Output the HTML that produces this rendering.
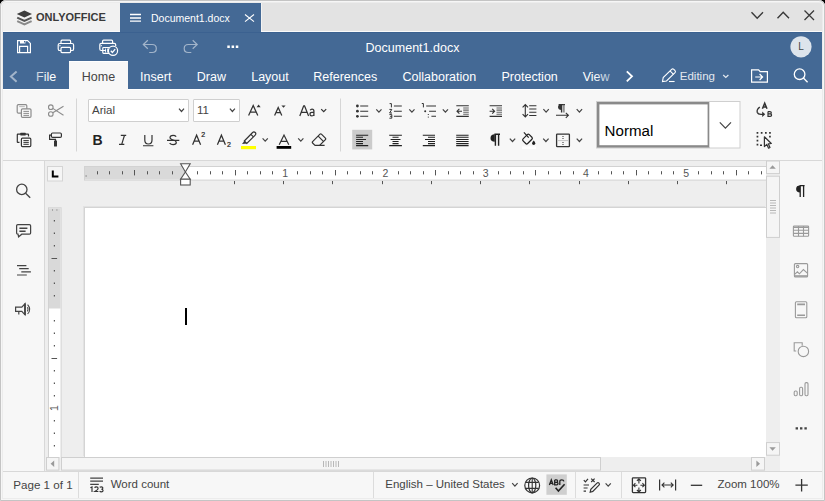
<!DOCTYPE html>
<html><head><meta charset="utf-8">
<style>
*{box-sizing:border-box;margin:0;padding:0}
html,body{width:825px;height:501px;overflow:hidden;background:#000}
body{font-family:"Liberation Sans",sans-serif;position:relative}
.a{position:absolute}
.t{position:absolute;white-space:nowrap;line-height:1}
svg{position:absolute;overflow:visible}
#win{position:absolute;left:0;top:0;width:825px;height:501px;background:#f7f7f7;border-radius:6px 6px 0 0;overflow:hidden}
</style></head>
<body>
<div id="win">
  <!-- title bar -->
  <div class="a" style="left:0;top:0;width:825px;height:33px;background:#e3e3e3"></div>
  <div class="a" style="left:2px;top:2px;width:118px;height:29px;background:#f1f1f1"></div>
  <div class="a" style="left:0;top:31px;width:825px;height:1px;background:#fafafa"></div>
  <div class="a" style="left:120px;top:3px;width:141px;height:30px;background:#446995"></div>
  <div class="a" style="left:261px;top:3px;width:1px;height:28px;background:#f3f3f3"></div>

  <!-- blue header -->
  <div class="a" style="left:0;top:32px;width:825px;height:58px;background:#446995"></div>
  <div class="a" style="left:0;top:32px;width:825px;height:1px;background:#3b6190"></div>
  <!-- active tab -->
  <div class="a" style="left:69px;top:61px;width:59px;height:29px;background:#f7f7f7;border-top:1px solid #fff"></div>
  <div class="a" style="left:0;top:89px;width:69px;height:1px;background:#fff"></div>
  <div class="a" style="left:128px;top:89px;width:697px;height:1px;background:#fff"></div>

  <!-- ribbon -->
  <div class="a" style="left:0;top:90px;width:825px;height:70px;background:#f7f7f7"></div>
  <div class="a" style="left:0;top:160px;width:825px;height:1px;background:#d8d8d8"></div>


  <div class="a" style="left:88px;top:99px;width:101px;height:23px;background:#fff;border:1px solid #cfcfcf;border-radius:1px"></div>
  <div class="a" style="left:193px;top:99px;width:47px;height:23px;background:#fff;border:1px solid #cfcfcf;border-radius:1px"></div>
  <!-- left sidebar -->
  <div class="a" style="left:0;top:161px;width:44px;height:311px;background:#f7f7f7"></div>
  <div class="a" style="left:44px;top:161px;width:1px;height:311px;background:#d8d8d8"></div>
  <!-- canvas -->
  <div class="a" style="left:45px;top:161px;width:735px;height:311px;background:#eeeeee"></div>
  <!-- right sidebar -->
  <div class="a" style="left:779px;top:161px;width:1px;height:311px;background:#d8d8d8"></div>
  <div class="a" style="left:780px;top:161px;width:45px;height:311px;background:#f7f7f7"></div>

  <!-- page -->
  <div class="a" style="left:84px;top:207px;width:682px;height:250px;background:#fff;border-left:1px solid #d4d4d4;border-top:1px solid #d4d4d4;box-shadow:-1px -1px 0 #e2e2e2"></div>

<svg width="825" height="501" viewBox="0 0 825 501" style="left:0;top:0" fill="none">
<rect x="47.5" y="166.5" width="15" height="14.5" fill="#f5f5f5" stroke="#d4d4d4"/>
<path d="M52.8 170.4V176.6H58.4" stroke="#000" stroke-width="2"/>
<rect x="84.5" y="166.5" width="690" height="13.6" fill="#fff" stroke="#d2d2d2"/>
<rect x="85" y="167" width="100" height="12.6" fill="#d9d9d9"/>
<path d="M97.5 171.2V174.4M109.5 171.2V174.4M122.5 171.2V174.4M134.5 170V175.4M147.5 171.2V174.4M159.5 171.2V174.4M172.5 171.2V174.4M197.5 171.2V174.4M210.5 171.2V174.4M222.5 171.2V174.4M235.5 170V175.4M247.5 171.2V174.4M260.5 171.2V174.4M272.5 171.2V174.4M297.5 171.2V174.4M310.5 171.2V174.4M322.5 171.2V174.4M335.5 170V175.4M347.5 171.2V174.4M360.5 171.2V174.4M372.5 171.2V174.4M398.5 171.2V174.4M410.5 171.2V174.4M423.5 171.2V174.4M435.5 170V175.4M448.5 171.2V174.4M460.5 171.2V174.4M473.5 171.2V174.4M498.5 171.2V174.4M510.5 171.2V174.4M523.5 171.2V174.4M535.5 170V175.4M548.5 171.2V174.4M560.5 171.2V174.4M573.5 171.2V174.4M598.5 171.2V174.4M611.5 171.2V174.4M623.5 171.2V174.4M636.5 170V175.4M648.5 171.2V174.4M661.5 171.2V174.4M673.5 171.2V174.4M698.5 171.2V174.4M711.5 171.2V174.4M723.5 171.2V174.4M736.5 170V175.4M748.5 171.2V174.4M761.5 171.2V174.4" stroke="#555" stroke-width="1"/>
<path d="M85.6 175.6h1v1h-1z" fill="#555"/>
<path d="M234.5 181V184.2M283.5 181V184.2M332.5 181V184.2M382.5 181V184.2M431.5 181V184.2M480.5 181V184.2M529.5 181V184.2M579.5 181V184.2M628.5 181V184.2M677.5 181V184.2M726.5 181V184.2" stroke="#555" stroke-width="1"/>
<path d="M180.6 163.8H190.2L185.4 172Z" fill="#fff" stroke="#555" stroke-width="1.1"/>
<path d="M185.4 172L190.2 179.2H180.6Z" fill="#fff" stroke="#555" stroke-width="1.1"/>
<rect x="180.6" y="179.2" width="9.6" height="5.8" fill="#fff" stroke="#555" stroke-width="1.1"/>
<rect x="48.5" y="207.8" width="12.6" height="262" fill="#fff" stroke="#d2d2d2"/>
<rect x="49" y="208.3" width="11.6" height="100.2" fill="#d9d9d9"/>
<rect x="53.8" y="220.00" width="1.2" height="1.5" fill="#555"/><rect x="53.8" y="232.50" width="1.2" height="1.5" fill="#555"/><rect x="53.8" y="245.00" width="1.2" height="1.5" fill="#555"/><path d="M51.5 258.5H57.1" stroke="#555" stroke-width="1"/><rect x="53.8" y="270.00" width="1.2" height="1.5" fill="#555"/><rect x="53.8" y="282.50" width="1.2" height="1.5" fill="#555"/><rect x="53.8" y="295.00" width="1.2" height="1.5" fill="#555"/><rect x="53.8" y="320.00" width="1.2" height="1.5" fill="#555"/><rect x="53.8" y="332.50" width="1.2" height="1.5" fill="#555"/><rect x="53.8" y="345.00" width="1.2" height="1.5" fill="#555"/><path d="M51.5 358.5H57.1" stroke="#555" stroke-width="1"/><rect x="53.8" y="370.00" width="1.2" height="1.5" fill="#555"/><rect x="53.8" y="382.50" width="1.2" height="1.5" fill="#555"/><rect x="53.8" y="395.00" width="1.2" height="1.5" fill="#555"/><rect x="53.8" y="420.00" width="1.2" height="1.5" fill="#555"/><rect x="53.8" y="432.50" width="1.2" height="1.5" fill="#555"/><rect x="53.8" y="445.00" width="1.2" height="1.5" fill="#555"/>
<path d="M52 209.5h1v1h-1zM56.4 209.5h1v1h-1z" fill="#777"/>
<text x="0" y="0" font-family="Liberation Sans" font-size="10.5" fill="#555" transform="translate(57.8 408) rotate(-90)" text-anchor="middle">1</text>
<rect x="766" y="161" width="14" height="296" fill="#eeeeee"/>
<rect x="766.5" y="161" width="13" height="12.6" fill="#f5f5f5" stroke="#cfcfcf"/>
<path d="M769.4 168.8L772.6 165.2L775.8 168.8Z" fill="#9a9a9a"/>
<rect x="766.5" y="176.2" width="13" height="61.2" fill="#f5f5f5" stroke="#cfcfcf"/>
<path d="M770 200.5H776M770 203H776M770 205.5H776M770 208H776M770 210.5H776M770 213H776" stroke="#b8b8b8" stroke-width="1"/>
<rect x="766.5" y="442.6" width="13" height="12.6" fill="#f5f5f5" stroke="#cfcfcf"/>
<path d="M769.4 447.2L772.6 450.8L775.8 447.2Z" fill="#9a9a9a"/>
<rect x="45" y="457" width="735" height="14" fill="#eeeeee"/>
<rect x="46.5" y="457.5" width="12.4" height="12.6" fill="#f5f5f5" stroke="#cfcfcf"/>
<path d="M54.2 460.6L50.6 463.8L54.2 467Z" fill="#9a9a9a"/>
<rect x="61.5" y="457.5" width="539" height="12.6" fill="#f5f5f5" stroke="#cfcfcf"/>
<path d="M323.5 461V467M326 461V467M328.5 461V467M331 461V467M333.5 461V467M336 461V467M338.5 461V467" stroke="#b8b8b8" stroke-width="1"/>
<rect x="751.5" y="457.5" width="13" height="12.6" fill="#f5f5f5" stroke="#cfcfcf"/>
<path d="M756.4 460.6L760 463.8L756.4 467Z" fill="#9a9a9a"/>
<rect x="185" y="308" width="2" height="17" fill="#000"/>
</svg>
  <div class="t" style="left:285.2px;top:168.2px;font-size:10.5px;color:#555;width:10px;margin-left:-5px;text-align:center">1</div>
  <div class="t" style="left:385.5px;top:168.2px;font-size:10.5px;color:#555;width:10px;margin-left:-5px;text-align:center">2</div>
  <div class="t" style="left:485.7px;top:168.2px;font-size:10.5px;color:#555;width:10px;margin-left:-5px;text-align:center">3</div>
  <div class="t" style="left:586.0px;top:168.2px;font-size:10.5px;color:#555;width:10px;margin-left:-5px;text-align:center">4</div>
  <div class="t" style="left:686.2px;top:168.2px;font-size:10.5px;color:#555;width:10px;margin-left:-5px;text-align:center">5</div>
  <!-- status bar -->
  <div class="a" style="left:0;top:471px;width:825px;height:1px;background:#d8d8d8"></div>
  <div class="a" style="left:0;top:472px;width:825px;height:29px;background:#f7f7f7"></div>

  <!-- window frame -->
  <div class="a" style="left:0;top:0;width:825px;height:501px;border:1px solid #c4c4c4;border-radius:6px 6px 0 0;box-shadow:inset 0 0 0 1px #f6f6f6,inset 0 0 0 2px #ececec"></div>


<svg width="825" height="501" viewBox="0 0 825 501" style="left:0;top:0" fill="none" stroke-linecap="butt">
<!-- ===== title bar ===== -->
<!-- logo -->
<path d="M24.4 10.6 L32 14.1 L24.4 17.6 L16.8 14.1 Z" fill="#3d3d3d"/>
<path d="M17.2 17.6 L24.4 21 L31.6 17.6" stroke="#555" stroke-width="2"/>
<path d="M17.2 21.2 L24.4 24.5 L31.6 21.2" stroke="#8a8a8a" stroke-width="2"/>
<!-- hamburger -->
<path d="M130 14.5H141M130 18H141M130 21.2H141" stroke="#fff" stroke-width="1.3"/>
<!-- tab close -->
<path d="M245 14.5L254 21.6M254 14.5L245 21.6" stroke="#fff" stroke-width="1.1"/>
<!-- window controls -->
<path d="M751.5 12.3L757.2 18.2L763 12.3" stroke="#3a3a3a" stroke-width="1.4"/>
<path d="M777.5 18.2L783.2 12.3L789 18.2" stroke="#3a3a3a" stroke-width="1.4"/>
<path d="M804.5 10.5L814 20M814 10.5L804.5 20" stroke="#3a3a3a" stroke-width="1.3"/>

<!-- ===== header ===== -->
<g stroke="#fff" stroke-width="1.2">
<path d="M17.6 40.6H27.6L30.4 43.4V52.6H17.6Z"/>
<path d="M19.6 52.6V46.4H27.6V52.6"/>
</g>
<path d="M20 40.3H25.4V43.4H20Z" fill="#fff"/>
<path d="M24 41H25V42.6H24Z" fill="#446995"/>
<!-- print -->
<g stroke="#fff" stroke-width="1.2">
<path d="M61 43.5V41.2Q61 40.2 62 40.2H69.6Q70.6 40.2 70.6 41.2V43.5"/>
<rect x="58.2" y="43.5" width="15.4" height="7" rx="1.6"/>
<rect x="61" y="47.4" width="9.6" height="5.2" rx="1" fill="#446995"/>
</g>
<path d="M59.3 45.3H60.6V46.3H59.3Z" fill="#fff"/>
<!-- quick print -->
<g stroke="#fff" stroke-width="1.2">
<path d="M102.6 43.3V41.2Q102.6 40.2 103.6 40.2H111.6Q112.6 40.2 112.6 41.2V43.3"/>
<path d="M106 50.5H101.2Q99.8 50.5 99.8 49V44.8Q99.8 43.3 101.3 43.3H114.2Q115.7 43.3 115.7 44.8V46"/>
<path d="M109 53.4H103.6Q102.8 53.4 102.8 52.6V48.3Q102.8 47.5 103.6 47.5H109"/>
<circle cx="113" cy="50.8" r="4.6" fill="#446995"/>
<path d="M110.8 50.8L112.4 52.5L115.2 49.2" stroke-width="1.3"/>
</g>
<path d="M100.6 45.3H102V46.3H100.6Z" fill="#fff"/>
<path d="M105 48.5H106V52.5H105ZM107 48.5H108V52.5H107Z" fill="#fff" opacity=".8"/>
<!-- undo/redo -->
<g stroke="#fff" stroke-opacity=".5" stroke-width="1.2">
<path d="M147.8 40.2L143.3 44.5L147.8 48.8M143.3 44.5H152.2Q156.3 44.5 156.3 48.5Q156.3 52.5 152.2 52.5H149.2"/>
<path d="M192.7 40.2L197.2 44.5L192.7 48.8M197.2 44.5H188.3Q184.2 44.5 184.2 48.5Q184.2 52.5 188.3 52.5H191.3"/>
</g>
<!-- more -->
<path d="M227.3 45.6h2.5v2.5h-2.5zM231.6 45.6h2.5v2.5h-2.5zM235.8 45.6h2.5v2.5h-2.5z" fill="#fff"/>
<!-- avatar -->
<circle cx="801" cy="46.8" r="10.6" fill="#dde4ec"/>

<!-- ===== tabs row ===== -->
<path d="M16.6 71.4L10.9 76.6L16.6 81.8" stroke="#fff" stroke-opacity=".5" stroke-width="2"/>
<path d="M626.8 71.3L632 76.3L626.8 81.3" stroke="#fff" stroke-width="1.8"/>
<!-- pencil -->
<g stroke="#fff" stroke-width="1.1">
<path d="M662.5 81.5L663.2 77.6L671.6 69.3Q672.7 68.3 673.8 69.3L675 70.5Q676 71.6 675 72.7L666.5 81Z"/>
<path d="M670 70.8L673.5 74.3"/>
<path d="M669 81.5H674.6"/>
</g>
<path d="M723.2 75L725.8 77.5L728.4 75" stroke="#fff" stroke-opacity=".85" stroke-width="1.2"/>
<!-- folder -->
<g stroke="#fff" stroke-width="1.2">
<path d="M751.6 82.2V69.9H758.6L760.2 71.7H767.4V82.2Z"/>
<path d="M755.2 77H762.6M759.6 74L762.6 77L759.6 80"/>
</g>
<!-- search -->
<g stroke="#fff" stroke-width="1.3">
<circle cx="799.6" cy="74.2" r="5.3"/>
<path d="M803.4 78L807.6 82.3"/>
</g>
</svg>


<svg width="825" height="501" viewBox="0 0 825 501" style="left:0;top:0" fill="none">
<!-- ===== ribbon ===== -->
<!-- copy (disabled) -->
<g stroke="#8c8c8c" stroke-width="1.2">
<rect x="17.2" y="104.6" width="9.6" height="8.6" rx="1.2"/>
<rect x="21.4" y="108.8" width="9.6" height="8.6" rx="1.2" fill="#f7f7f7"/>
<path d="M23.4 111.4H29M23.4 113.4H29M23.4 115.4H29" stroke-width="1"/>
</g>
<path d="M19.2 106.6H24.8" stroke="#bbb" stroke-width="1"/>
<!-- cut -->
<g stroke="#8c8c8c" stroke-width="1.1">
<circle cx="50.8" cy="107.2" r="2.3"/>
<circle cx="50.8" cy="114" r="2.3"/>
<path d="M52.8 108.4L63.5 115.2M52.8 112.8L63.5 106.2"/>
</g>
<!-- paste -->
<g stroke="#333" stroke-width="1.2">
<path d="M19.5 142.4H17.8Q17.3 142.4 17.3 141.9V134.7Q17.3 134.2 17.8 134.2H20.2M25.8 134.2H28Q28.5 134.2 28.5 134.7V136.6"/>
<rect x="21.4" y="138.2" width="9.4" height="8.4" rx="1"/>
<path d="M23.4 140.6H28.8M23.4 142.4H28.8M23.4 144.3H28.8" stroke-width="1"/>
</g>
<rect x="20.1" y="132.7" width="5.8" height="2.8" rx=".8" fill="#333"/>
<!-- format painter -->
<g stroke="#333" stroke-width="1.2">
<rect x="51.4" y="133" width="10" height="4.4" rx="1.2"/>
<path d="M51.4 135.2H49.6V139.4H55.5V141"/>
</g>
<rect x="54" y="140.6" width="3" height="6" rx=".5" fill="#333"/>
<!-- separators -->
<path d="M76.5 98.5V151.5" stroke="#d6d6d6" stroke-width="1"/>
<path d="M340.5 98.5V151.5" stroke="#d6d6d6" stroke-width="1"/>

<!-- combos chevrons -->
<path d="M179 108.7L181.5 111.5L184 108.7" stroke="#444" stroke-width="1.2"/>
<path d="M229.9 108.7L232.4 111.5L234.9 108.7" stroke="#444" stroke-width="1.2"/>
<!-- grow / shrink font -->
<g stroke="#333" stroke-width="1.25">
<path d="M248.6 115.6L253.2 105.4L257.8 115.6M250.2 112.2H256.2"/>
<path d="M274.6 115.6L278.2 107.6L281.8 115.6M275.9 112.7H280.5"/>
<path d="M299.8 116L303.6 106Q304.1 105.2 304.6 106L308.6 116M301.4 112.4H307"/>
<path d="M310.2 110.3Q310.8 109.1 312 109.1Q313.9 109.1 313.9 111V116M313.9 112.4H311.9Q310 112.4 310 114.2Q310 115.9 311.8 115.9Q313.4 115.9 313.9 114.6"/>
<path d="M321.2 109.1L323.7 111.7L326.2 109.1" stroke-width="1.2"/>
</g>
<path d="M256.6 107.2L258.6 104.6L260.6 107.2Z" fill="#333"/>
<path d="M281.4 105.4L283.5 107.8L285.6 105.4Z" fill="#333"/>
<!-- row2: B I U S -->
<!-- superscript / subscript A -->
<g stroke="#333" stroke-width="1.25">
<path d="M192.6 144.8L196.6 135.2L200.6 144.8M194.1 141.2H199.1"/>
<path d="M217.4 144.8L221.4 135.2L225.4 144.8M218.9 141.2H223.9"/>
</g>
<!-- highlight -->
<g stroke="#333" stroke-width="1.15">
<path d="M244.3 141L252.6 132.5Q253.9 131.2 255.2 132.5Q256.5 133.8 255.2 135.1L246.8 143.5Z"/>
<path d="M253.4 136.9L250.9 134.4"/>
</g>
<path d="M244.3 141L246.8 143.5L242 144Z" fill="#333"/>
<rect x="241" y="146" width="15" height="3.2" fill="#ffff00"/>
<path d="M262.6 138.4L265.2 141.2L267.8 138.4" stroke="#444" stroke-width="1.2"/>
<!-- font color -->
<path d="M279.2 144.8L284 135L288.8 144.8M281 141.3H287" stroke="#333" stroke-width="1.2"/>
<rect x="276.6" y="146" width="14.6" height="2.8" fill="#000"/>
<path d="M298.2 138.4L300.8 141.2L303.4 138.4" stroke="#444" stroke-width="1.2"/>
<!-- eraser -->
<g stroke="#333" stroke-width="1.2">
<path d="M315 145.4L312.6 143Q311.9 142.3 312.6 141.6L320 134.2Q320.7 133.5 321.4 134.2L325.4 138.2Q326.1 138.9 325.4 139.6L319.6 145.4Z"/>
<path d="M319.6 145.4H324.6M318.2 136.2L323.4 141.4"/>
</g>
<!-- lists -->
<g fill="#333">
<circle cx="357.4" cy="106" r="1.4"/><circle cx="357.4" cy="111.2" r="1.4"/><circle cx="357.4" cy="116.3" r="1.4"/>
</g>
<path d="M360.2 106H368.2M360.2 111.2H368.2M360.2 116.3H368.2" stroke="#333" stroke-width="1.1"/>
<path d="M376.3 109.3L378.9 112.2L381.5 109.3" stroke="#444" stroke-width="1.2"/>
<path d="M393.9 106H401.8M393.9 111.2H401.8M393.9 116.3H401.8" stroke="#333" stroke-width="1.1"/>
<g stroke="#333" stroke-width="1">
<path d="M389.6 103.6H391.4V107.4"/>
<path d="M389.4 109.4H391.8L389.6 113H392"/>
<path d="M389.4 114.6H391.8V118.2H389.4M390.2 116.4H391.8"/>
</g>
<path d="M409.3 109.3L411.9 112.2L414.5 109.3" stroke="#444" stroke-width="1.2"/>
<!-- multilevel -->
<path d="M426.2 106H436M429.1 111.2H436M431.4 116.3H436" stroke="#333" stroke-width="1.1"/>
<path d="M421.8 103.5H423.4V107.4" stroke="#333" stroke-width="1"/>
<circle cx="425.2" cy="111.2" r="1" fill="#333"/>
<path d="M428.3 114V115M428.3 116.6V117.6" stroke="#333" stroke-width="1"/>
<path d="M442.8 109.3L445.4 112.2L448 109.3" stroke="#444" stroke-width="1.2"/>
<!-- decrease indent -->
<g stroke="#333" stroke-width="1.1">
<path d="M456.3 105.8H468.8M456.3 116.4H468.8"/>
<path d="M463.2 108H468.8M463.2 110.1H468.8M463.2 112.3H468.8M463.2 114.3H468.8" stroke="#666"/>
<path d="M457 111.2H462M459.4 108.8L457 111.2L459.4 113.6"/>
</g>
<!-- increase indent -->
<g stroke="#333" stroke-width="1.1">
<path d="M489.6 105.8H502M489.6 116.4H502"/>
<path d="M496.5 108H502M496.5 110.1H502M496.5 112.3H502M496.5 114.3H502" stroke="#666"/>
<path d="M489.6 111.2H494.6M492.2 108.8L494.6 111.2L492.2 113.6"/>
</g>
<!-- line spacing -->
<g stroke="#333" stroke-width="1.1">
<path d="M525.3 104.8V116.6M522.6 107.4L525.3 104.6L528 107.4M522.6 114.2L525.3 117L528 114.2"/>
<path d="M529.2 105.8H536.4M529.2 109H536.4M529.2 112.3H536.4M529.2 115.5H536.4"/>
</g>
<path d="M543.4 109.2L546.1 112.2L548.8 109.2" stroke="#444" stroke-width="1.2"/>
<!-- text direction pilcrow -->
<path d="M558.6 104.6H565M561.6 104.8V112.4" stroke="#333" stroke-width="1.4"/>
<path d="M563.9 104.8V112.4" stroke="#777" stroke-width="1.4"/>
<path d="M561.6 104.2A3.6 2.9 0 0 0 561.6 110Z" fill="#333"/>
<path d="M556 115.3H568.4M565.8 112.8L568.4 115.3L565.8 117.8" stroke="#333" stroke-width="1.1"/>
<path d="M576.7 109.2L579.4 112.2L582.1 109.2" stroke="#444" stroke-width="1.2"/>
<!-- alignment -->
<rect x="352.2" y="129.8" width="20" height="19.6" fill="#cbcbcb"/>
<g stroke="#222" stroke-width="1.05">
<path d="M356.1 135.2H368.2M356.1 137.3H363M356.1 139.4H366M356.1 141.5H363M356.1 143.6H363M356.1 145.6H368.2"/>
<path d="M389.2 135.2H401.9M392.5 137.3H398.6M390.6 139.4H400.5M392.5 141.5H398.6M392.5 143.6H398.6M389.2 145.6H401.9"/>
<path d="M422.8 135.2H435M428 137.3H435M425 139.4H435M428 141.5H435M428 143.6H435M422.8 145.6H435"/>
<path d="M456.2 135.2H468.6M456.2 137.3H468.6M456.2 139.4H468.6M456.2 141.5H468.6M456.2 143.6H468.6M456.2 145.6H468.6"/>
</g>
<!-- pilcrow -->
<path d="M494.4 134.2H500M495.4 134.4V145.8M498.6 134.4V145.8" stroke="#222" stroke-width="1.4"/>
<path d="M494.8 134.2A4.3 3.8 0 0 0 494.8 141.8Z" fill="#222"/>
<path d="M509.8 138.6L512.5 141.5L515.2 138.6" stroke="#444" stroke-width="1.2"/>
<!-- shading -->
<g stroke="#222" stroke-width="1.2">
<rect x="-3.25" y="-4.4" width="6.5" height="8.8" rx="1.4" transform="translate(527.5 139.1) rotate(45)"/>
<path d="M523.9 132.3L528.7 137.6"/>
</g>
<path d="M533.7 140.6Q535.3 142.4 535.3 143.3A1.6 1.6 0 0 1 532.1 143.3Q532.1 142.4 533.7 140.6Z" fill="#222"/>
<rect x="522" y="146.4" width="14" height="2.8" fill="#fff"/>
<path d="M543.2 138.6L545.9 141.5L548.6 138.6" stroke="#444" stroke-width="1.2"/>
<!-- borders -->
<rect x="556.6" y="134.2" width="12.8" height="12.4" rx=".6" stroke="#333" stroke-width="1.3"/>
<path d="M558 140.6H568" stroke="#c4c4c4" stroke-width="1"/>
<path d="M562.2 136h1.6v1h-1.6zM562.2 138h1.6v1h-1.6zM562.2 142h1.6v1h-1.6zM562.2 144h1.6v1h-1.6z" fill="#777"/>
<path d="M576.7 138.6L579.4 141.5L582.1 138.6" stroke="#444" stroke-width="1.2"/>
<!-- style box -->
<rect x="596.5" y="101.5" width="143.5" height="46.5" fill="#fff" stroke="#cfcfcf" stroke-width="1"/>
<rect x="598.2" y="103.2" width="110.6" height="43.2" stroke="#8a8a8a" stroke-width="2.4"/>
<path d="M709.5 102V147.5" stroke="#dcdcdc" stroke-width="1"/>
<path d="M719.8 122.4L725.4 128.2L731 122.4" stroke="#444" stroke-width="1.2"/>
<!-- replace -->
<path d="M759.8 107Q756.6 109.4 757.2 112.2Q758 114.3 761 114.3H763.4" stroke="#333" stroke-width="1.3"/>
<path d="M762.2 111.6L765.2 114.3L762.2 117Z" fill="#333"/>
<path d="M762.4 108.8L764.7 103.2L767 108.8M763.2 107H766.2" stroke="#333" stroke-width="1.5"/>
<path d="M768 111.6V116.3H770.2Q771.6 116.3 771.6 115Q771.6 113.9 770.2 113.9H768M768 111.6H769.9Q771.3 111.6 771.3 112.7Q771.3 113.9 769.9 113.9" stroke="#333" stroke-width="1.2"/>
<!-- select all -->
<path d="M756.6 132.0h1.7v1.7h-1.7zM760.8 132.0h1.7v1.7h-1.7zM765.0 132.0h1.7v1.7h-1.7zM769.1 132.0h1.7v1.7h-1.7zM756.6 135.8h1.7v1.7h-1.7zM756.6 139.8h1.7v1.7h-1.7zM756.6 143.8h1.7v1.7h-1.7zM769.1 135.8h1.7v1.7h-1.7zM760 144.6h2v1.4h-2z" fill="#333"/>
<path d="M764.4 136.8L764.4 146.6L766.8 144.4L768.6 148.2L770 147.5L768.3 143.8L771.3 143.5Z" fill="#f7f7f7" stroke="#333" stroke-width="1.2" stroke-linejoin="round"/>
</svg>


<svg width="825" height="501" viewBox="0 0 825 501" style="left:0;top:0" fill="none">
<g stroke="#333" stroke-width="1.2">
<path d="M120.8 135.3H126.2M119 144.4H124.3M124.5 135.3L121.7 144.4"/>
<path d="M144.8 135V140Q144.8 144 148.4 144Q152 144 152 140V135"/>
<path d="M143 145.8H153.4" stroke-width="1.1"/>
<path d="M176.2 136.6Q175 135.3 173.1 135.3Q170 135.3 170 137.6Q170 139.3 173.1 140Q176.3 140.8 176.3 142.6Q176.3 144.6 173.1 144.6Q170.9 144.6 169.6 143.2"/>
<path d="M167 140.4H179.3" stroke-width="1.1"/>
</g>
</svg>


<svg width="825" height="501" viewBox="0 0 825 501" style="left:0;top:0" fill="none">
<!-- left sidebar -->
<g stroke="#444" stroke-width="1.3">
<circle cx="21.8" cy="189.4" r="5.2"/>
<path d="M25.6 193.2L30.2 197.8"/>
</g>
<g stroke="#444" stroke-width="1.25">
<path d="M18 234.2H17.8Q16.6 234.2 16.6 233V225.8Q16.6 224.6 17.8 224.6H29.4Q30.6 224.6 30.6 225.8V233Q30.6 234.2 29.4 234.2H21.8L18.6 236.8Z"/>
<path d="M19.4 228.2H27.4M19.4 231.2H25.6" stroke-width="1.4"/>
</g>
<path d="M17 265.6H26.4M19.2 268.7H28.7M21.3 271.8H30.9M17 275H26.8" stroke="#444" stroke-width="1.2"/>
<g stroke="#444" stroke-width="1.2">
<path d="M15.6 307.2H21.8L25 303.8V314.8L21.8 311.4H15.6Z"/>
<path d="M18.8 311.4V314.6"/>
<path d="M25 303.6V315" stroke-width="1.7"/>
<path d="M27.6 304.6Q31.8 309.3 27.6 314M27.4 307.2Q28.8 309.3 27.4 311.4" stroke-width="1.1"/>
</g>
<!-- right sidebar -->
<path d="M799.6 185.6H804.6M800.2 185.8V197M803.6 185.8V197" stroke="#222" stroke-width="1.3"/>
<path d="M800 185.6A3.9 3.4 0 0 0 800 192.4Z" fill="#222"/>
<g stroke="#9a9a9a" stroke-width="1.1">
<rect x="793.4" y="226" width="15.2" height="10.2" rx=".8"/>
<path d="M793.4 227.2H808.6" stroke-width="1.6"/>
<path d="M793.4 230.3H808.6M793.4 233.4H808.6M798.5 226V236.2M803.5 226V236.2"/>
</g>
<g stroke="#9a9a9a" stroke-width="1.1">
<rect x="794.4" y="263.6" width="13.2" height="13.4" rx="1"/>
<circle cx="797.6" cy="266.6" r="1.2"/>
<path d="M794.6 274.4L797.4 271.8L799.4 273.8L803.4 269.6L807.6 273.4"/>
<path d="M794.4 276H807.6" stroke-width="1.6"/>
</g>
<g stroke="#9a9a9a" stroke-width="1.1">
<rect x="795.4" y="301.8" width="11.4" height="16" rx="1"/>
<path d="M797.2 304.4H805M797.2 315.2H805" stroke-width="1.6"/>
</g>
<g stroke="#9a9a9a" stroke-width="1.1">
<path d="M796.2 351H794.2V342.8H802.2V345.8"/>
<circle cx="803.4" cy="351.4" r="5.2"/>
</g>
<g stroke="#9a9a9a" stroke-width="1.1">
<rect x="794.2" y="391" width="3" height="4.8" rx="1.2"/>
<rect x="799.6" y="387.2" width="3" height="8.6" rx="1.2"/>
<rect x="805" y="382.6" width="3" height="13.2" rx="1.2"/>
</g>
<path d="M795.6 427.2h2.4v2.4h-2.4zM800 427.2h2.4v2.4h-2.4zM804.4 427.2h2.4v2.4h-2.4z" fill="#444"/>
<!-- status separators -->
<path d="M78.5 472V498M373.5 472V498M575.5 472V498M621.5 472V498" stroke="#dcdcdc" stroke-width="1"/>
<!-- word count icon -->
<path d="M90.2 478.2H103M90.2 481.2H103M90.2 484.4H98.8" stroke="#444" stroke-width="1.3"/>
<g stroke="#333" stroke-width="1.15" fill="none">
<path d="M90.4 487.8L92 486.9V491.9"/>
<path d="M94.7 487.9Q94.9 486.9 96.4 486.9Q98.1 486.9 98.1 488.2Q98.1 489.1 96.8 490.1L94.8 491.5H98.4"/>
<path d="M99.7 487.3Q100.3 486.9 101.3 486.9Q102.9 486.9 102.9 488.1Q102.9 489.2 101.3 489.2Q103.1 489.2 103.1 490.4Q103.1 491.8 101.2 491.8Q100.2 491.8 99.6 491.3"/>
</g>
<!-- globe -->
<g stroke="#333" stroke-width="1.2">
<circle cx="532.2" cy="485.4" r="7.4"/>
<ellipse cx="532.2" cy="485.4" rx="3.6" ry="7.4"/>
<path d="M532.2 478V492.8M525.8 482.4H538.6M525.8 488.4H538.6" stroke-width="1.1"/>
</g>
<!-- spell check -->
<rect x="546.4" y="474.4" width="20.4" height="20.4" fill="#cfcfcf"/>
<path d="M555.6 487.8L558.4 491L564.6 484.2" stroke="#222" stroke-width="1.6"/>
<g stroke="#222" stroke-width="1.3" fill="none">
<path d="M549.4 484.9L551.3 479.9L553.2 484.9M550.1 483.3H552.5"/>
<path d="M554.7 479.9V484.9H556.7Q558 484.9 558 483.5Q558 482.3 556.7 482.3H554.7M554.7 479.9H556.5Q557.6 479.9 557.6 481.1Q557.6 482.3 556.5 482.3"/>
<path d="M559.8 484.9V481.6Q559.8 479.9 561.8 479.9Q563.6 479.9 563.9 481.3"/>
</g>
<path d="M512.2 483.2L514.9 486.2L517.6 483.2" stroke="#444" stroke-width="1.2"/>
<!-- track changes -->
<g stroke="#333" stroke-width="1.2">
<path d="M583.8 480.2L585.4 481.8L588 478.8"/>
<path d="M591.2 478.6L594.6 482M594.6 478.6L591.2 482"/>
<path d="M583.6 485H589M583.6 488H587.6M583.6 491.2H586"/>
<path d="M590.2 492.2L590.8 489.4L597 483.2Q598 482.2 599 483.2Q600 484.2 599 485.2L592.8 491.4Z"/>
</g>
<path d="M605.6 483.4L608.2 486.2L610.8 483.4" stroke="#444" stroke-width="1.2"/>
<!-- fit page -->
<g stroke="#333" stroke-width="1.2">
<rect x="632.4" y="477.8" width="13.2" height="14.8" rx=".8" stroke-width="1.3"/>
<path d="M638.9 478.8V483.4M636.9 480.8L638.9 478.8L640.9 480.8M638.9 487.4V492M636.9 490L638.9 492L640.9 490M633.4 485.2H637.4M635.4 483.2L633.4 485.2L635.4 487.2M640.4 485.2H644.4M642.4 483.2L644.4 485.2L642.4 487.2" stroke-width="1.1"/>
</g>
<!-- fit width -->
<g stroke="#333" stroke-width="1.2">
<path d="M659.6 479.4V490.6M675.6 479.4V490.6"/>
<path d="M662 485H673.2M664.4 482.6L662 485L664.4 487.4M670.8 482.6L673.2 485L670.8 487.4" stroke-width="1.1"/>
</g>
<!-- minus plus -->
<path d="M690.8 485.3H702.2" stroke="#333" stroke-width="1.3"/>
<path d="M795.4 485.2H807.8M801.6 479V491.4" stroke="#333" stroke-width="1.3"/>
</svg>

  <!-- texts -->
  <div class="t" style="left:36px;top:12.3px;font-size:11px;font-weight:bold;color:#3a3a3a">ONLYOFFICE</div>
  <div class="t" style="left:151px;top:12.7px;font-size:10.5px;color:#fff">Document1.docx</div>
  <div class="t" style="left:365.6px;top:41.5px;font-size:12.5px;color:#fff">Document1.docx</div>

  <div class="t" style="left:36px;top:71.2px;font-size:12.5px;color:#fff">File</div>
  <div class="a" style="left:32px;top:66px;width:16px;height:20px;background:linear-gradient(to right,rgba(68,105,149,.45),rgba(68,105,149,0))"></div>
  <div class="t" style="left:81.8px;top:71.2px;font-size:12.5px;color:#444">Home</div>
  <div class="t" style="left:140.1px;top:71.2px;font-size:12.5px;color:#fff">Insert</div>
  <div class="t" style="left:196.8px;top:71.2px;font-size:12.5px;color:#fff">Draw</div>
  <div class="t" style="left:251.2px;top:71.2px;font-size:12.5px;color:#fff">Layout</div>
  <div class="t" style="left:313.3px;top:71.2px;font-size:12.5px;color:#fff">References</div>
  <div class="t" style="left:402.5px;top:71.2px;font-size:12.5px;color:#fff">Collaboration</div>
  <div class="t" style="left:501.5px;top:71.2px;font-size:12.5px;color:#fff">Protection</div>
  <div class="t" style="left:582.7px;top:71.2px;font-size:12.5px;color:#fff">View</div>
  <div class="a" style="left:594px;top:66px;width:22px;height:20px;background:linear-gradient(to right,rgba(68,105,149,0),rgba(68,105,149,.6))"></div>
  <div class="t" style="left:679.8px;top:71.3px;font-size:11.5px;color:#fff;opacity:.85">Editing</div>

  <div class="t" style="left:13.3px;top:479.1px;font-size:11.6px;color:#444">Page 1 of 1</div>
  <div class="t" style="left:110.7px;top:479.1px;font-size:11.5px;color:#444">Word count</div>
  <div class="t" style="left:385.3px;top:479.1px;font-size:11.5px;color:#444">English – United States</div>
  <div class="t" style="left:717.5px;top:479.1px;font-size:11.5px;color:#444">Zoom 100%</div>

  <div class="t" style="left:92px;top:104.7px;font-size:11.5px;color:#444">Arial</div>
  <div class="t" style="left:197px;top:104.7px;font-size:11.5px;color:#444">11</div>
  <div class="t" style="left:604.6px;top:123px;font-size:15.1px;color:#000">Normal</div>
  <div class="t" style="left:92.6px;top:133.2px;font-size:14px;font-weight:bold;color:#222">B</div>
  <div class="t" style="left:201.2px;top:131.2px;font-size:7px;color:#222;-webkit-text-stroke:.2px #222">2</div>
  <div class="t" style="left:227px;top:140.8px;font-size:7px;color:#222;-webkit-text-stroke:.2px #222">2</div>

  <div class="t" style="left:798.2px;top:41.9px;font-size:10px;color:#444">L</div>
</div>
</body></html>
